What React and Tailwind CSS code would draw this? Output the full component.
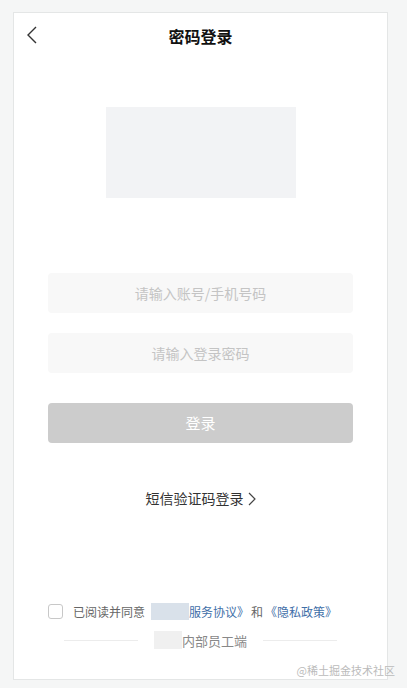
export default function App() {
	const font = { fontFamily: '"Noto Sans CJK SC", "Noto Sans", sans-serif' };

	return (
		<div className="relative h-[688px] w-[407px] overflow-hidden bg-[#f5f6f6] pt-3 pl-[13px]" style={font}>
			<div className="flex h-[668px] w-[375px] flex-col border border-[#e4e6e6] bg-white">
				<header className="relative flex h-[46px] items-center justify-center">
					<svg className="absolute top-[13px] left-[12px]" width="12" height="18" viewBox="0 0 12 18" fill="none">
						<path d="M10 1 L2 9 L10 17" stroke="#333" strokeWidth="1.4" />
					</svg>
					<h1 className="text-[16px] font-bold text-[#111]">密码登录</h1>
				</header>

				<div className="mt-[48px] flex justify-center">
					<div className="h-[91px] w-[190px] bg-[#f2f3f5]" />
				</div>

				<div className="mt-[75px] flex flex-col px-[34px]">
					<div className="flex h-[40px] items-center justify-center rounded bg-[#f8f8f8] text-[14px] text-[#c4c4c4]">
						请输入账号/手机号码
					</div>
					<div className="mt-[20px] flex h-[40px] items-center justify-center rounded bg-[#f8f8f8] text-[14px] text-[#c4c4c4]">
						请输入登录密码
					</div>
					<button className="mt-[30px] flex h-[40px] items-center justify-center rounded bg-[#cccccc] text-[15px] text-white">
						登录
					</button>
				</div>

				<div className="mt-[45px] flex items-center justify-center gap-1 text-[14px] text-[#333]">
					<span>短信验证码登录</span>
					<svg width="8" height="14" viewBox="0 0 8 14" fill="none">
						<path d="M1 1 L7 7 L1 13" stroke="#444" strokeWidth="1.2" />
					</svg>
				</div>

				<div className="mt-auto flex items-center pl-[34px] text-[12px] text-[#666]">
					<span className="h-[15px] w-[15px] rounded-[3px] border border-[#c8c8c8]" />
					<span className="ml-[10px]">已阅读并同意</span>
					<span className="ml-[2px] text-[#bbb]">《</span>
					<span className="-ml-[8px] h-[17px] w-[38px] bg-[#d9e1ea]" />
					<span className="text-[#3f6fa8]">服务协议》</span>
					<span className="ml-[2px]">和</span>
					<span className="ml-[2px] text-[#3f6fa8]">《隐私政策》</span>
				</div>

				<div className="mt-[10px] mb-[29px] flex items-center px-[50px]">
					<div className="h-px flex-1 bg-[#ececec]" />
					<div className="mx-[16px] flex items-center text-[13px] text-[#888]">
						<span className="h-[18px] w-[28px] bg-[#f0f0f0]" />
						<span>内部员工端</span>
					</div>
					<div className="h-px flex-1 bg-[#ececec]" />
				</div>
			</div>
			<span className="absolute right-[12px] bottom-[10px] text-[11px] text-[#bbb]">@稀土掘金技术社区</span>
		</div>
	);
}
